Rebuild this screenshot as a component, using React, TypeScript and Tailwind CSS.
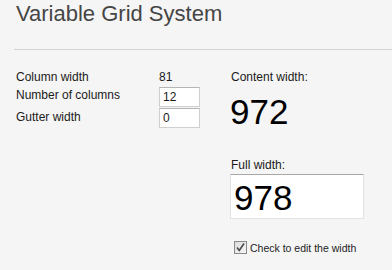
import React from "react";

export default function App() {
  return (
    <div className="w-[392px] h-[270px] overflow-hidden bg-[#f5f5f5] font-['Liberation_Sans',Arial,sans-serif] text-[#1a1a1a]">
      <div className="h-[49px] pl-4 pt-[1px]">
        <h1 className="text-[22px] leading-[26px] text-[#454545] font-normal">Variable Grid System</h1>
      </div>
      <div className="ml-[14px] h-px bg-[#d2d2d2]" />
      <div className="flex mt-[18px]">
        <div className="pl-4 w-[200px] text-[12px]">
          <div className="flex h-[18px] leading-[18px]">
            <div className="w-[143px]">Column width</div>
            <div>81</div>
          </div>
          <div className="flex h-[21px]">
            <div className="w-[143px] leading-[18px]">Number of columns</div>
            <div className="mt-[1px] w-[41px] h-[20px] bg-white border border-[#cfcfcf] border-t-[#b5b5b5] pl-[3px] leading-[18px]">12</div>
          </div>
          <div className="flex h-[21px]">
            <div className="w-[143px] leading-[18px] mt-[1px]">Gutter width</div>
            <div className="mt-[1px] w-[41px] h-[20px] bg-white border border-[#cfcfcf] border-t-[#b5b5b5] pl-[3px] leading-[19px]">0</div>
          </div>
        </div>
        <div className="ml-[30px] flex flex-col">
          <div className="text-[12px] leading-[18px] pl-px">Content width:</div>
          <div className="mt-[8px] text-[35px] leading-[35px] text-black">972</div>
          <div className="mt-[27px] text-[12px] leading-[18px] pl-px">Full width:</div>
          <div className="w-[134px] h-[45px] bg-white border border-[#e2e2e2] border-t-[#a8a8a8] pl-[3px] pt-[5px] text-[35px] leading-[35px] text-black">978</div>
          <div className="mt-[22px] ml-[4px] flex items-center">
            <span className="w-[13px] h-[13px] border border-[#8a8a8a] bg-gradient-to-br from-[#dcdcdc] to-[#f6f6f6] flex items-center justify-center">
              <svg width="11" height="11" viewBox="0 0 11 11">
                <path d="M2 5.5 L4.3 8.5 L9 1.5" fill="none" stroke="#4a4a4a" strokeWidth="1.6" />
              </svg>
            </span>
            <span className="ml-[3px] text-[10.5px] leading-[12px] text-[#222]">Check to edit the width</span>
          </div>
        </div>
      </div>
    </div>
  );
}
